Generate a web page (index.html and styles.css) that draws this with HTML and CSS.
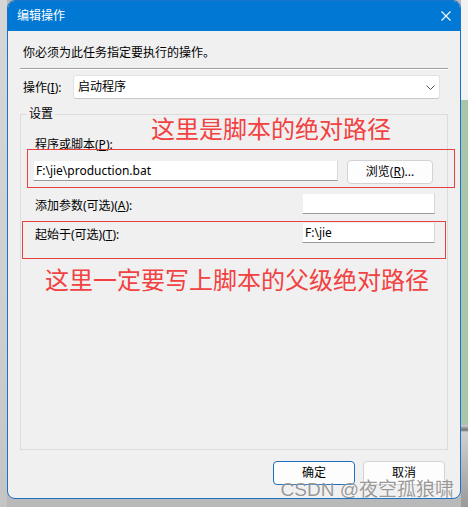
FILE: index.html
```html
<!DOCTYPE html>
<html lang="zh-CN">
<head>
  <meta charset="UTF-8">
  <title>编辑操作</title>
  <link rel="stylesheet" href="styles.css">
</head>
<body>
  <div class="desk">
    <div class="side-left"></div>
    <div class="dialog">
      <div class="titlebar">
        <span class="title">编辑操作</span>
        <svg class="close" width="10" height="10" viewBox="0 0 10 10">
          <path d="M0.5 0.5 L9.5 9.5 M9.5 0.5 L0.5 9.5" stroke="#fff" stroke-width="1.1" fill="none"/>
        </svg>
      </div>
      <div class="content">
        <p class="hint">你必须为此任务指定要执行的操作。</p>
        <div class="sep"></div>
        <div class="action-row">
          <label class="action-label">操作(<u>I</u>):</label>
          <div class="select">
            <span>启动程序</span>
            <svg width="9" height="5" viewBox="0 0 9 5">
              <path d="M0.5 0.5 L4.5 4.5 L8.5 0.5" stroke="#555" stroke-width="1" fill="none"/>
            </svg>
          </div>
        </div>
        <fieldset class="group">
          <legend>设置</legend>
          <div class="field-label">程序或脚本(<u>P</u>):</div>
          <div class="path-row">
            <div class="input wide">F:\jie\production.bat</div>
            <button class="btn browse">浏览(<u>R</u>)...</button>
          </div>
          <div class="opt-row">
            <span class="opt-label">添加参数(可选)(<u>A</u>):</span>
            <div class="input short"></div>
          </div>
          <div class="opt-row second">
            <span class="opt-label">起始于(可选)(<u>T</u>):</span>
            <div class="input short">F:\jie</div>
          </div>
        </fieldset>
        <div class="footer">
          <button class="btn primary">确定</button>
          <button class="btn">取消</button>
        </div>
      </div>

      <!-- annotations drawn on top of the screenshot -->
      <div class="mark mark-path"></div>
      <div class="mark mark-start"></div>
      <div class="note note-path">这里是脚本的绝对路径</div>
      <div class="note note-start">这里一定要写上脚本的父级绝对路径</div>
      <div class="watermark">CSDN @夜空孤狼啸</div>
    </div>
    <div class="side-right"></div>
  </div>
</body>
</html>
```

FILE: styles.css
```css
* {
  box-sizing: border-box;
}
body {
  margin: 0;
  font-family: "Noto Sans", "Noto Sans CJK SC", sans-serif;
  font-size: 12px;
  color: #000;
}
.desk {
  display: flex;
  align-items: flex-start;
  width: 468px;
  height: 507px;
  background: #b9b9b9;
  overflow: hidden;
}
.side-left {
  width: 7px;
  height: 507px;
  background: linear-gradient(to bottom, #d6d6d6 0, #cfcfcf 300px, #c4c4c4 507px);
}
.side-right {
  flex: 1;
  height: 507px;
  background: linear-gradient(to bottom, #f2f2f2 0, #f2f2f2 100px, #a9c5a9 100px, #a9c5a9 425px, #d4d4d4 425px, #707070 430px, #d0d0d0 432px, #9a9a9a 507px);
}
.dialog {
  position: relative;
  width: 454px;
  height: 499px;
  background: #f0f0f0;
  border: 1px solid #1a72c9;
  border-radius: 8px;
  overflow: hidden;
  display: flex;
  flex-direction: column;
}
.titlebar {
  height: 30px;
  background: #0078d4;
  color: #fff;
  display: flex;
  align-items: center;
  justify-content: space-between;
  padding: 0 9px 0 9px;
  line-height: 16px;
}
.content {
  padding: 0 12px;
}
.hint {
  margin: 14px 0 0;
  padding-left: 3px;
  line-height: 16px;
}
.sep {
  margin-top: 7px;
  border-top: 1px solid #a0a0a0;
  border-bottom: 1px solid #fff;
}
.action-row {
  display: flex;
  align-items: center;
  margin-top: 5px;
  padding-left: 3px;
}
.action-label {
  width: 50px;
  line-height: 16px;
  padding-top: 1px;
}
.select {
  width: 367px;
  height: 24px;
  background: #fff;
  border: 1px solid #e2e2e2;
  border-bottom-color: #c8c8c8;
  border-radius: 3px;
  display: flex;
  align-items: center;
  justify-content: space-between;
  padding: 0 4px 0 4px;
  line-height: 16px;
}
.group {
  margin: 7px 0 0;
  padding: 0 12px;
  height: 344px;
  border: 1px solid #dcdcdc;
}
.group legend {
  margin-left: -6px;
  padding: 0 2px;
  line-height: 16px;
}
.field-label {
  margin-top: 15px;
  padding-left: 2px;
  line-height: 16px;
}
.path-row {
  display: flex;
  align-items: flex-start;
  margin-top: 7px;
}
.input {
  height: 21px;
  background: #fff;
  border: 1px solid #f0f0f0;
  border-right-color: #d8d8d8;
  border-bottom-color: #9a9a9a;
  padding: 0 2px;
  line-height: 19px;
  white-space: nowrap;
}
.wide {
  width: 305px;
}
.short {
  width: 133px;
  margin-left: auto;
}
.btn {
  font-family: "Noto Sans", "Noto Sans CJK SC", sans-serif;
  font-size: 12px;
  color: #000;
  height: 24px;
  background: #fdfdfd;
  border: 1px solid #d3d3d3;
  border-radius: 4px;
  padding: 0;
  line-height: 16px;
}
.browse {
  width: 86px;
  margin-left: 9px;
}
.opt-row {
  display: flex;
  align-items: flex-start;
  margin-top: 9px;
}
.opt-row.second {
  margin-top: 8px;
}
.opt-label {
  padding: 5px 0 0 2px;
  line-height: 16px;
}
.footer {
  display: flex;
  justify-content: flex-end;
  gap: 8px;
  margin-top: 11px;
  padding-right: 3px;
}
.footer .btn {
  width: 82px;
}
.primary {
  border-color: #1c6fc2;
}
.mark {
  position: absolute;
  border: 1px solid #e8403f;
}
.mark-path {
  left: 19px;
  top: 148px;
  width: 428px;
  height: 39px;
}
.mark-start {
  left: 14px;
  top: 220px;
  width: 424px;
  height: 38px;
}
.note {
  position: absolute;
  font-size: 24px;
  line-height: 24px;
  color: #f24141;
  white-space: nowrap;
}
.note-path {
  left: 143px;
  top: 116px;
}
.note-start {
  left: 37px;
  top: 267px;
}
.watermark {
  position: absolute;
  right: 6px;
  top: 478px;
  font-family: "Liberation Sans", "Noto Sans CJK SC", sans-serif;
  font-size: 19px;
  line-height: 22px;
  color: rgba(120, 120, 120, 0.75);
  white-space: nowrap;
  text-shadow: 0 0 2px rgba(255, 255, 255, 0.8);
}
```
